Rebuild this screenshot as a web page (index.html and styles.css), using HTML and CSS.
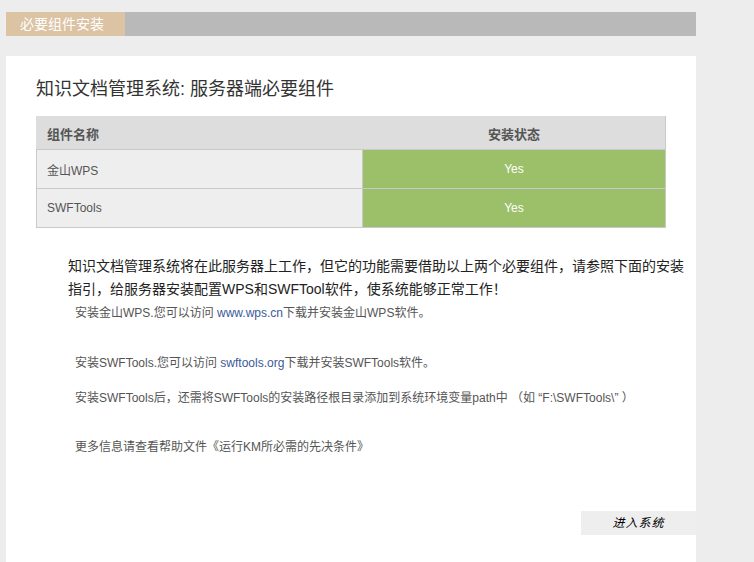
FILE: index.html
```html
<!DOCTYPE html>
<html lang="zh-CN">
<head>
<meta charset="utf-8">
<title>必要组件安装</title>
<link rel="stylesheet" href="styles.css">
</head>
<body>
<div class="wrap">
  <div class="topbar">
    <div class="tab">必要组件安装</div>
    <div class="bar-rest"></div>
  </div>
  <div class="panel">
    <h1 class="title">知识文档管理系统: 服务器端必要组件</h1>
    <table class="comp">
      <thead>
        <tr><th class="c-name">组件名称</th><th class="c-state">安装状态</th></tr>
      </thead>
      <tbody>
        <tr><td class="c-name">金山WPS</td><td class="c-state ok">Yes</td></tr>
        <tr><td class="c-name">SWFTools</td><td class="c-state ok">Yes</td></tr>
      </tbody>
    </table>
    <p class="intro">知识文档管理系统将在此服务器上工作，但它的功能需要借助以上两个必要组件，请参照下面的安装指引，给服务器安装配置WPS和SWFTool软件，使系统能够正常工作！</p>
    <p class="note n1">安装金山WPS.您可以访问 <a class="link" href="#">www.wps.cn</a>下载并安装金山WPS软件。</p>
    <p class="note n2">安装SWFTools.您可以访问 <a class="link" href="#">swftools.org</a>下载并安装SWFTools软件。</p>
    <p class="note n3">安装SWFTools后，还需将SWFTools的安装路径根目录添加到系统环境变量path中 （如 “F:\SWFTools\” ）</p>
    <p class="note n4">更多信息请查看帮助文件《运行KM所必需的先决条件》</p>
    <div class="enter">进入系统</div>
  </div>
</div>
</body>
</html>
```
FILE: styles.css
```css
html, body {
  margin: 0;
  padding: 0;
}
body {
  background: #ededed;
  font-family: "Liberation Sans", "Noto Sans CJK SC", sans-serif;
  color: #333;
  height: 562px;
  overflow: hidden;
}
.wrap {
  width: 690px;
  margin-left: 6px;
  padding-top: 12px;
}
.topbar {
  display: flex;
  height: 24px;
}
.tab {
  width: 119px;
  background: #dbc3a3;
  color: #fff;
  font-size: 14px;
  line-height: 24px;
  padding-left: 14px;
  box-sizing: border-box;
}
.bar-rest {
  flex: 1;
  background: #b9b9b9;
}
.panel {
  margin-top: 20px;
  background: #fff;
  height: 506px;
  display: flex;
  flex-direction: column;
  align-items: flex-start;
  padding-top: 21px;
  box-sizing: border-box;
}
.title {
  margin: 0 0 0 30px;
  font-size: 18px;
  line-height: 24px;
  font-weight: normal;
  color: #333;
}
.comp {
  margin: 15px 0 0 30px;
  width: 630px;
  border-collapse: collapse;
  font-size: 12px;
}
.comp th, .comp td {
  border: 1px solid #c9c9c9;
  padding: 0;
}
.comp thead th {
  background: #dddddd;
  height: 32px;
  font-size: 13px;
  font-weight: bold;
  color: #555;
  border-top-color: #dddddd;
}
.comp thead th.c-name {
  border-left-color: #dddddd;
  border-right-color: #dddddd;
}
.comp thead th.c-state {
  border-left-color: #dddddd;
}
.comp th.c-name {
  text-align: left;
  padding-left: 10px;
  width: 315px;
}
.comp td {
  height: 38px;
}
.comp td.c-name {
  background: #eeeeee;
  color: #555;
  padding-left: 10px;
}
.comp .c-state {
  text-align: center;
}
.comp td.ok {
  background: #9cc069;
  color: #fff;
}
.comp tbody tr + tr td.ok {
  border-top-color: #c9dab3;
}
.intro {
  margin: 27px 0 0 62px;
  width: 620px;
  font-size: 14px;
  line-height: 23px;
  color: #222;
}
.note {
  margin: 0 0 0 69px;
  font-size: 12px;
  line-height: 18px;
  color: #555;
}
.n1 { margin-top: 3px; }
.n2 { margin-top: 32px; }
.n3 { margin-top: 17px; }
.n4 { margin-top: 31px; }
.link {
  color: #3b5a99;
  text-decoration: none;
}
.enter {
  align-self: flex-end;
  margin-top: 55px;
  width: 115px;
  height: 24px;
  background: #eeeeee;
  text-align: center;
  font-size: 12px;
  line-height: 24px;
  font-style: italic;
  color: #000;
  letter-spacing: 1px;
}
```
